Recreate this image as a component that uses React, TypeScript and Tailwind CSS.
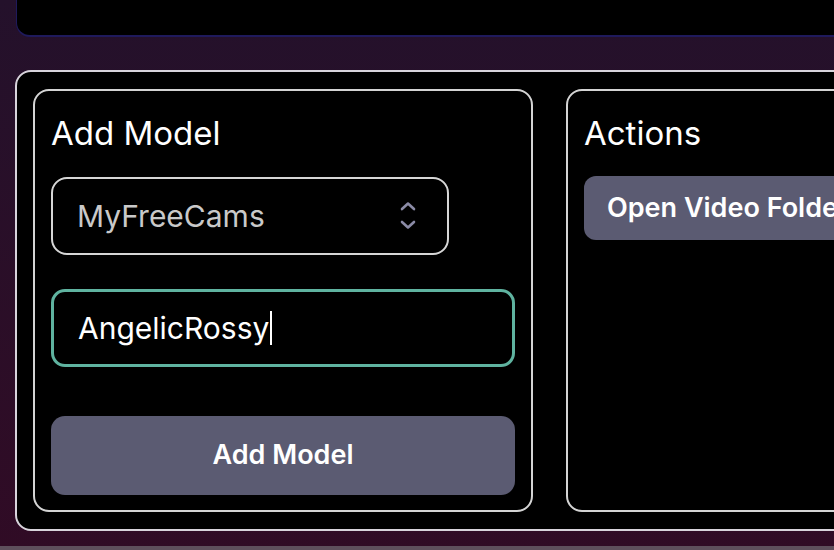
import React from "react";

export default function App() {
  return (
    <div
      className="relative h-[550px] w-full overflow-hidden bg-gradient-to-b from-[#24112b] to-[#300b25]"
      style={{ fontFamily: "Inter, 'Noto Sans', sans-serif" }}
    >
      <div className="ml-4 h-[37px] rounded-bl-[14px] border-b-2 border-l border-[#1f1a5c] bg-black" />
      <div className="ml-[15px] mt-[33px] flex h-[461px] w-[1000px] gap-[33px] rounded-[16px] border-2 border-[#d8d4dc] bg-black px-4 pb-[17px] pt-[17px]">
        <div className="flex w-[500px] shrink-0 flex-col rounded-[16px] border-2 border-[#d4d4d4] px-4">
          <h2 className="mt-[26px] text-[33px] leading-none text-white">Add Model</h2>
          <div className="mt-[27px] flex h-[78px] w-[398px] items-center justify-between rounded-[16px] border-2 border-[#d6d6d6] pl-[24px] pr-[30px]">
            <span className="text-[30px] text-[#c9c9c9]">MyFreeCams</span>
            <svg width="18" height="32" viewBox="0 0 18 32" fill="none" stroke="#8b8ba6" strokeWidth="2.6" strokeLinecap="round" strokeLinejoin="round">
              <path d="M3 9 L9 3.5 L15 9" />
              <path d="M3 22 L9 27.5 L15 22" />
            </svg>
          </div>
          <div className="mt-[34px] flex h-[78px] w-full items-center rounded-[14px] border-[3px] border-[#5fb3a0] pl-[24px]">
            <span className="text-[30px] text-white">AngelicRossy</span>
            <span className="ml-[1px] inline-block h-[34px] w-[2px] bg-white" />
          </div>
          <button className="mt-[49px] flex h-[79px] w-full items-center justify-center rounded-[14px] bg-[#5b5b72] text-[27px] font-semibold text-white">
            Add Model
          </button>
        </div>
        <div className="flex flex-1 flex-col rounded-[16px] border-2 border-[#d4d4d4] px-4">
          <h2 className="mt-[26px] text-[33px] leading-none text-white">Actions</h2>
          <button className="mt-[26px] flex h-[64px] w-[300px] items-center rounded-[12px] bg-[#5b5b72] pl-[23px] text-[27px] font-semibold text-white">
            Open Video Folder
          </button>
        </div>
      </div>
      <div className="absolute bottom-0 left-0 h-[4px] w-full bg-[#5e4f5c]" />
    </div>
  );
}
